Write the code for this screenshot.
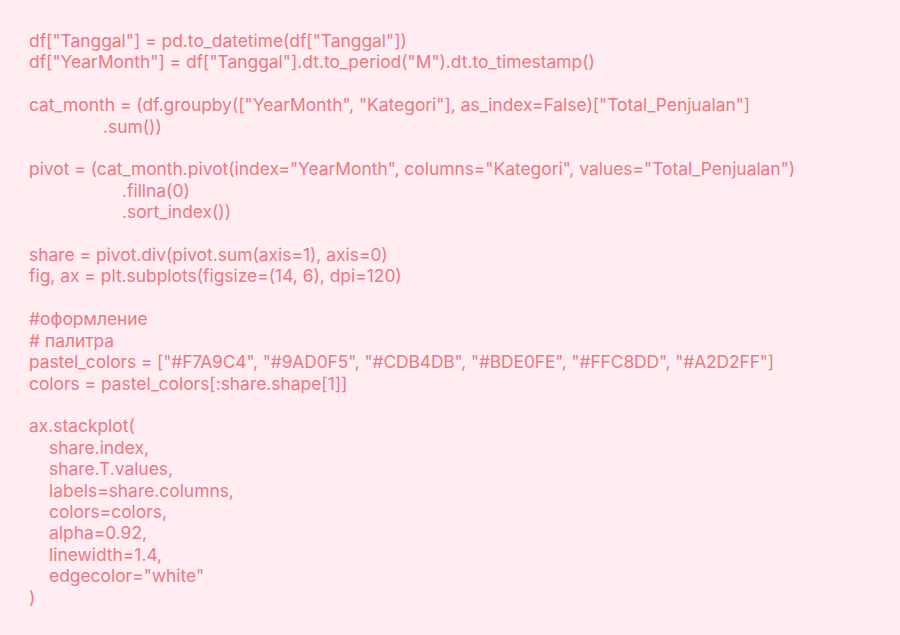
import React from "react";

type L = { t: string; i?: number; tight?: boolean };

const lines: L[] = [
  { t: 'df["Tanggal"] = pd.to_datetime(df["Tanggal"])' },
  { t: 'df["YearMonth"] = df["Tanggal"].dt.to_period("M").dt.to_timestamp()' },
  { t: "" },
  { t: 'cat_month = (df.groupby(["YearMonth", "Kategori"], as_index=False)["Total_Penjualan"]' },
  { t: ".sum())", i: 1 },
  { t: "" },
  { t: 'pivot = (cat_month.pivot(index="YearMonth", columns="Kategori", values="Total_Penjualan")' },
  { t: ".fillna(0)", i: 2 },
  { t: ".sort_index())", i: 2 },
  { t: "" },
  { t: "share = pivot.div(pivot.sum(axis=1), axis=0)" },
  { t: "fig, ax = plt.subplots(figsize=(14, 6), dpi=120)" },
  { t: "" },
  { t: "#оформление" },
  { t: "# палитра" },
  { t: 'pastel_colors = ["#F7A9C4", "#9AD0F5", "#CDB4DB", "#BDE0FE", "#FFC8DD", "#A2D2FF"]', tight: true },
  { t: "colors = pastel_colors[:share.shape[1]]" },
  { t: "" },
  { t: "ax.stackplot(" },
  { t: "share.index,", i: 3 },
  { t: "share.T.values,", i: 3 },
  { t: "labels=share.columns,", i: 3 },
  { t: "colors=colors,", i: 3 },
  { t: "alpha=0.92,", i: 3 },
  { t: "linewidth=1.4,", i: 3 },
  { t: 'edgecolor="white"', i: 3 },
  { t: ")" },
];

const indent: Record<number, string> = {
  0: "pl-0",
  1: "pl-[74px]",
  2: "pl-[93px]",
  3: "pl-[20px]",
};

export default function App() {
  return (
    <div
      className="w-[900px] h-[635px] bg-[#ffedf2] text-[#ef7884] pt-[30px] px-[29px] overflow-hidden"
      style={{ fontFamily: "Inter, 'Noto Sans', sans-serif" }}
    >
      <div className="text-[17.4px] leading-[21.42px] whitespace-pre">
        {lines.map((l, k) => (
          <div
            key={k}
            className={`h-[21.42px] ${indent[l.i ?? 0]} ${l.tight ? "tracking-[-0.1px]" : ""}`}
          >
            {l.t}
          </div>
        ))}
      </div>
    </div>
  );
}
